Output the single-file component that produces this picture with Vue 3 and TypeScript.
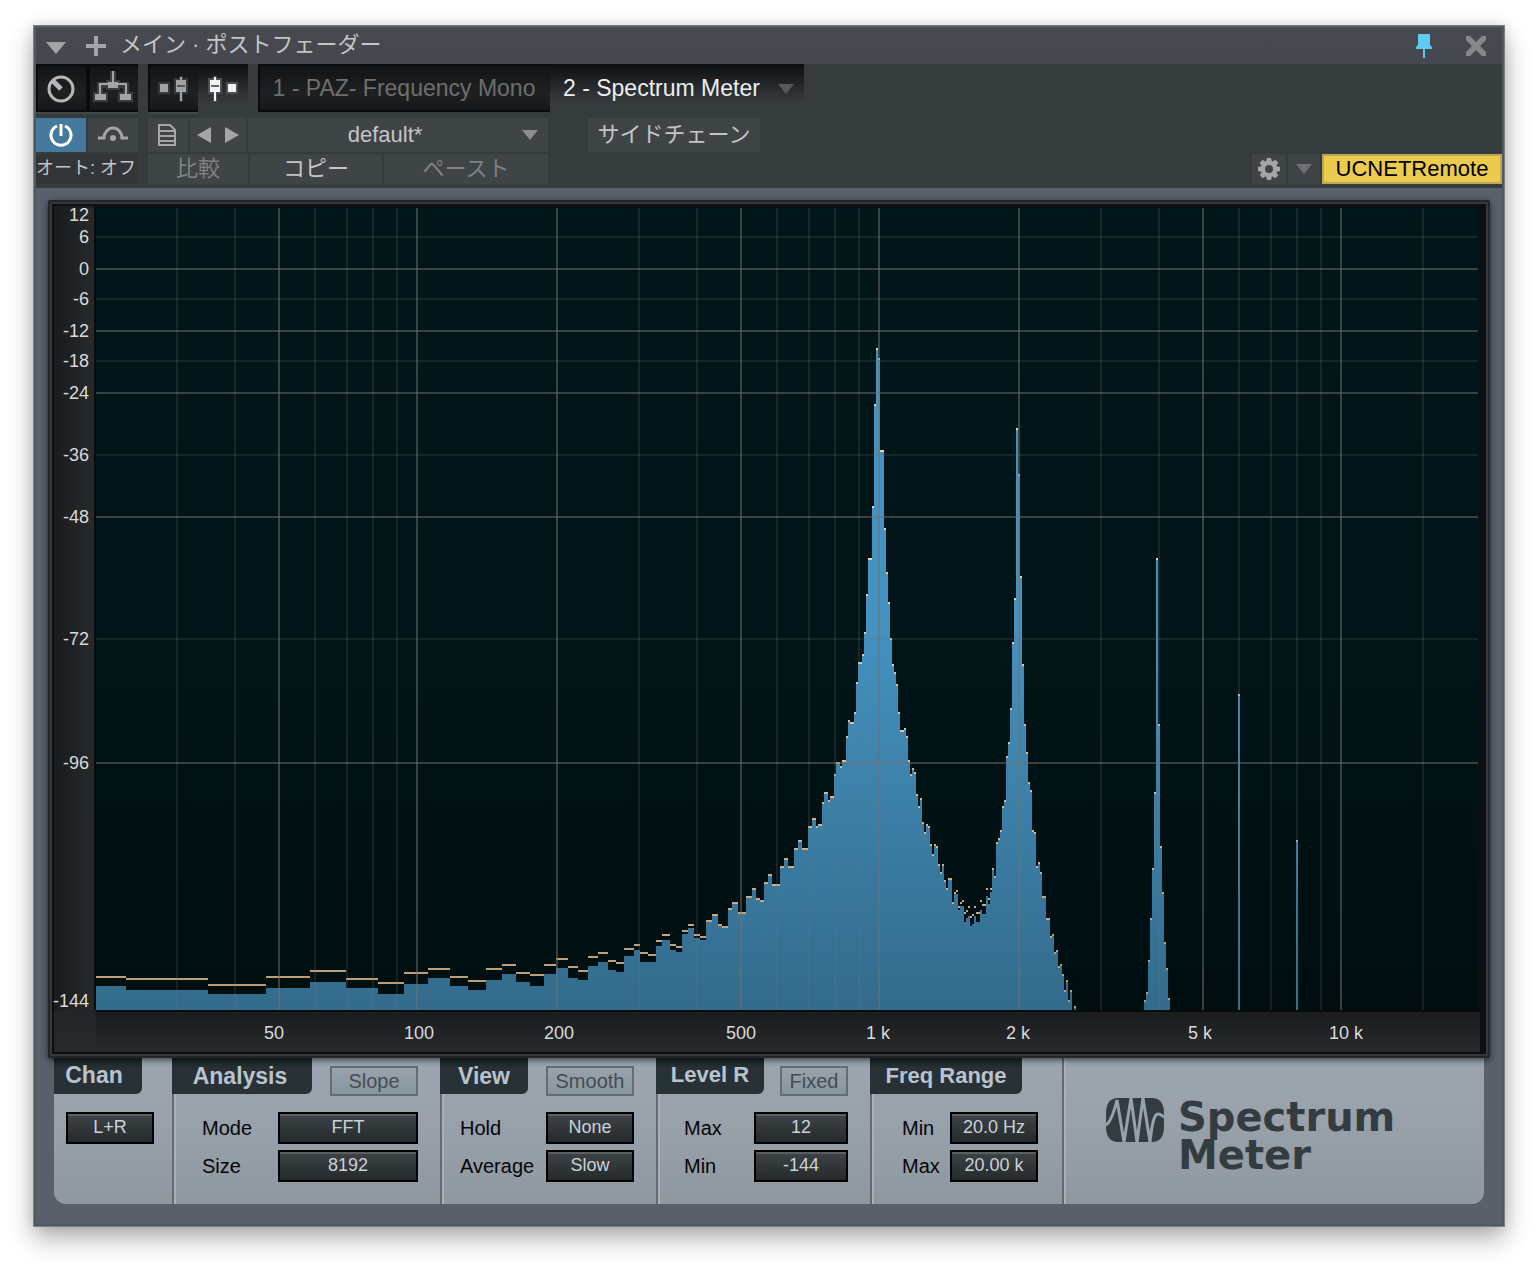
<script setup lang="ts">
import { ref } from 'vue'

type Bin = [x: number, hold: number, level?: number]

// Plot area in device units
const plot = { x: 96, y: 208, w: 1382, h: 802 }
const floor = plot.y + plot.h

// Left edge, peak-hold height and (when lower than the hold) current level
const bins: Bin[] = [
  [96, 976, 986], [126, 978, 990], [208, 984, 994], [266, 976, 988], [310, 970, 982],
  [346, 978, 988], [378, 982, 994], [404, 972, 984], [428, 968, 978], [450, 976, 986],
  [468, 980, 990], [486, 968, 980], [502, 964, 974], [516, 972, 982], [530, 974, 986],
  [544, 964, 974], [556, 958, 968], [568, 966, 978], [578, 970, 980], [588, 956, 966],
  [598, 952, 962], [608, 960, 970], [616, 962, 972], [624, 948, 956], [634, 944, 950],
  [640, 952, 962], [648, 954, 962], [656, 940, 946], [662, 934, 940], [670, 944, 950],
  [676, 946, 952], [682, 930, 934], [688, 924, 928], [694, 934, 938], [700, 936, 940],
  [706, 920], [712, 914], [718, 924], [722, 926], [728, 908], [732, 902], [738, 912],
  [746, 896], [752, 888], [756, 898], [760, 900], [764, 882], [768, 874], [772, 884],
  [780, 866], [784, 858], [788, 866], [794, 848], [798, 840], [802, 848], [808, 826],
  [812, 818], [816, 826], [818, 824], [822, 802], [824, 792], [828, 800], [830, 796],
  [834, 774], [836, 762], [840, 766], [842, 760], [846, 736], [848, 720], [850, 722],
  [854, 712], [856, 682], [858, 662], [862, 654], [864, 632], [866, 594], [868, 558],
  [872, 506], [874, 404], [876, 348], [878, 358], [880, 450], [884, 528], [886, 572],
  [888, 602], [890, 638], [892, 664], [894, 672], [896, 684], [898, 712], [900, 730],
  [904, 728], [906, 736], [908, 760], [910, 774], [912, 768], [914, 772], [916, 794],
  [918, 806], [920, 798], [922, 822], [924, 832], [926, 824], [928, 826], [930, 844],
  [932, 854], [934, 844], [936, 846], [938, 864], [940, 872], [942, 864], [944, 880],
  [946, 888], [948, 878], [952, 902], [954, 892], [956, 890, 894], [958, 906, 910],
  [960, 902, 906], [962, 900, 906], [964, 912, 922], [966, 910, 918], [968, 906, 916],
  [970, 916, 926], [972, 914, 924], [974, 906, 916], [976, 912, 922], [980, 900, 910],
  [982, 904, 914], [986, 888, 896], [988, 898, 904], [990, 888, 892], [992, 868],
  [994, 876], [996, 842], [998, 838], [1000, 830], [1002, 806], [1004, 800], [1006, 756],
  [1008, 742], [1010, 708], [1012, 642], [1014, 598], [1016, 428], [1018, 474],
  [1020, 576], [1022, 664], [1024, 724], [1026, 752], [1028, 782], [1030, 790],
  [1032, 830], [1034, 832], [1036, 866], [1038, 862], [1040, 872], [1042, 896],
  [1046, 918], [1050, 936], [1052, 934], [1054, 952], [1056, 950], [1058, 966],
  [1060, 964], [1062, 974], [1064, 990], [1066, 980], [1068, 1000], [1070, 990],
  [1072, floor], [1074, 1006], [1076, floor], [1144, 1000], [1146, 992], [1148, 960],
  [1150, 918], [1152, 868], [1154, 792], [1156, 558], [1158, 724], [1160, 846],
  [1162, 892], [1164, 942], [1166, 968], [1168, 998], [1170, floor], [1238, 694],
  [1240, floor], [1296, 840], [1298, floor],
]

const endOf = (i: number) => (i + 1 < bins.length ? bins[i + 1][0] : bins[i][0])

const levelPath =
  `M${plot.x} ${floor}` +
  bins.map(([x, hold, level], i) => `L${x} ${level ?? hold}H${endOf(i)}`).join('') +
  `V${floor}Z`

const holdPath = bins
  .map(([x, hold], i) => (hold < floor ? `M${x} ${hold}H${endOf(i)}v2H${x}Z` : ''))
  .join('')

const majorX = [278, 416, 556, 740, 878, 1018, 1202, 1340]
const minorX = [176, 234, 314, 346, 372, 396, 638, 696, 776, 808, 834, 858, 1100, 1158, 1238, 1270, 1296, 1320, 1422]
const majorY = [268, 330, 392, 516, 762]
const minorY = [236, 298, 360, 454, 638]

const levels = [
  { text: '12', y: 215 }, { text: '6', y: 237 }, { text: '0', y: 269 }, { text: '-6', y: 299 },
  { text: '-12', y: 331 }, { text: '-18', y: 361 }, { text: '-24', y: 393 }, { text: '-36', y: 455 },
  { text: '-48', y: 517 }, { text: '-72', y: 639 }, { text: '-96', y: 763 }, { text: '-144', y: 1001 },
]
const freqs = [
  { text: '50', x: 274 }, { text: '100', x: 419 }, { text: '200', x: 559 }, { text: '500', x: 741 },
  { text: '1 k', x: 878 }, { text: '2 k', x: 1018 }, { text: '5 k', x: 1200 }, { text: '10 k', x: 1346 },
]
const topOf = (y: number) => `${((y - plot.y) / plot.h) * 100}%`
const leftOf = (x: number) => `${((x - plot.x) / plot.w) * 100}%`

const preset = ref('default*')
const channel = ref('L+R')

interface Field { id: string; label: string; value: string; kind: 'select' | 'input' }
interface Section { name: string; title: string; toggle?: string; fields: Field[] }

const sections = ref<Section[]>([
  {
    name: 'analysis', title: 'Analysis', toggle: 'Slope',
    fields: [
      { id: 'mode', label: 'Mode', value: 'FFT', kind: 'select' },
      { id: 'size', label: 'Size', value: '8192', kind: 'select' },
    ],
  },
  {
    name: 'view', title: 'View', toggle: 'Smooth',
    fields: [
      { id: 'hold', label: 'Hold', value: 'None', kind: 'select' },
      { id: 'average', label: 'Average', value: 'Slow', kind: 'select' },
    ],
  },
  {
    name: 'level', title: 'Level R', toggle: 'Fixed',
    fields: [
      { id: 'level-max', label: 'Max', value: '12', kind: 'input' },
      { id: 'level-min', label: 'Min', value: '-144', kind: 'input' },
    ],
  },
  {
    name: 'freq', title: 'Freq Range',
    fields: [
      { id: 'freq-min', label: 'Min', value: '20.0 Hz', kind: 'input' },
      { id: 'freq-max', label: 'Max', value: '20.00 k', kind: 'input' },
    ],
  },
])
</script>

<template>
  <main class="window">
    <header class="titlebar">
      <button class="bare" aria-label="Menu">
        <svg width="20" height="20" viewBox="0 0 20 20"><path d="M0 6H20L10 18Z" fill="#a3a6a8" /></svg>
      </button>
      <button class="bare plus" aria-label="Add">
        <svg width="20" height="20" viewBox="0 0 20 20"><path d="M8 0h4v8h8v4h-8v8H8v-8H0V8h8Z" fill="#a3a6a8" /></svg>
      </button>
      <h1>メイン · ポストフェーダー</h1>
      <button class="bare pin" aria-label="Pin">
        <svg width="16" height="24" viewBox="0 0 16 24"><path d="M2 0H14V11L16 13V15H9V24H7V15H0V13L2 11Z" fill="#5fcbf3" /></svg>
      </button>
      <button class="bare close" aria-label="Close">
        <svg width="20" height="20" viewBox="0 0 20 20"><path d="M0 0H4L10 6L16 0H20V4L14 10L20 16V20H16L10 14L4 20H0V16L6 10L0 4Z" fill="#86898b" /></svg>
      </button>
    </header>

    <section class="toolbar">
      <div class="row modes">
        <div class="group">
          <button class="well" aria-label="Controls">
            <svg width="50" height="48" viewBox="0 0 50 48" fill="none" stroke="#b4b6b7">
              <circle cx="25" cy="25" r="12" stroke-width="3" /><path d="M17 17L25 25" stroke-width="5" />
            </svg>
          </button>
          <button class="well" aria-label="Routing">
            <svg width="50" height="48" viewBox="0 0 50 48">
              <path d="M25 7V19M12 31V21H38V31" fill="none" stroke="#3b3d3e" stroke-width="6" />
              <path d="M18 16h14v10H18ZM5 28h15v10H5ZM30 28h15v10H30Z" fill="#3b3d3e" />
              <path d="M25 7V19M12 31V20H38V31" fill="none" stroke="#a2a4a5" stroke-width="2" />
              <path d="M20 18h10v6H20ZM7 30h11v6H7ZM32 30h11v6H32Z" fill="#a2a4a5" />
            </svg>
          </button>
        </div>
        <div class="group">
          <button class="well" aria-label="Pre fader">
            <svg width="50" height="48" viewBox="0 0 50 48">
              <path d="M10 18h12v12H10ZM26 14h14v16H26ZM31 12h4v26h-4Z" fill="#38393a" />
              <path d="M12 20h8v8h-8ZM28 16h10v12H28ZM32 13h2v24h-2Z" fill="#a0a2a3" />
              <path d="M29 21h8v2h-8Z" fill="#555" />
            </svg>
          </button>
          <button class="well active" aria-label="Post fader">
            <svg width="50" height="48" viewBox="0 0 50 48">
              <path d="M10 14h14v16H10ZM15 12h4v26h-4ZM28 18h12v12H28Z" fill="#4d5052" />
              <path d="M12 16h10v12H12ZM16 13h2v24h-2ZM30 20h8v8h-8Z" fill="#f2f3f3" />
              <path d="M13 21h8v2h-8Z" fill="#666" />
            </svg>
          </button>
        </div>
        <nav class="tabs">
          <button class="well tab first">1 - PAZ- Frequency Mono</button>
          <button class="well tab active">
            <span>2 - Spectrum Meter</span>
            <svg width="16" height="10" viewBox="0 0 16 10"><path d="M0 0H16L8 10Z" fill="#56595c" /></svg>
          </button>
        </nav>
      </div>

      <div class="row upper">
        <button class="key power" aria-label="Power">
          <svg width="50" height="34" viewBox="0 0 50 34" fill="none" stroke="#fff" stroke-width="3">
            <path d="M21 8A10 10 0 1 0 29 8" /><path d="M25 6V18" />
          </svg>
        </button>
        <button class="key bypass" aria-label="Bypass">
          <svg width="50" height="34" viewBox="0 0 50 34">
            <path d="M10 20H16A9 10 0 0 1 34 20H40" fill="none" stroke="#a3a6a8" stroke-width="3" />
            <circle cx="25" cy="20" r="3" fill="#a3a6a8" />
          </svg>
        </button>
        <button class="key file" aria-label="Preset menu">
          <svg width="40" height="34" viewBox="0 0 40 34" fill="none" stroke="#a3a6a8" stroke-width="2">
            <path d="M11 7H22L27 12V27H11ZM11 13H26M11 18H26M11 23H26" />
          </svg>
        </button>
        <div class="stepper">
          <button class="key" aria-label="Previous preset">
            <svg width="14" height="16" viewBox="0 0 14 16"><path d="M14 0V16L0 8Z" fill="#a3a6a8" /></svg>
          </button>
          <button class="key" aria-label="Next preset">
            <svg width="14" height="16" viewBox="0 0 14 16"><path d="M0 0V16L14 8Z" fill="#a3a6a8" /></svg>
          </button>
        </div>
        <div class="preset">
          <select v-model="preset" aria-label="Preset"><option>default*</option></select>
          <svg width="16" height="10" viewBox="0 0 16 10"><path d="M0 0H16L8 10Z" fill="#8b8f92" /></svg>
        </div>
        <button class="key kana sidechain">サイドチェーン</button>
      </div>

      <div class="row lower">
        <span class="auto">オート: オフ</span>
        <button class="key kana compare dim">比較</button>
        <button class="key kana copy">コピー</button>
        <button class="key kana paste dim">ペースト</button>
        <button class="key gear" aria-label="Settings">
          <svg width="22" height="22" viewBox="-11 -11 22 22">
            <circle r="6" fill="none" stroke="#a3a6a8" stroke-width="4" />
            <path v-for="n in 8" :key="n" d="M-2 -11H2L3 -7H-3Z" fill="#a3a6a8" :transform="`rotate(${n * 45})`" />
          </svg>
        </button>
        <button class="key more" aria-label="More">
          <svg width="16" height="10" viewBox="0 0 16 10"><path d="M0 0H16L8 10Z" fill="#6d7174" /></svg>
        </button>
        <button class="remote">UCNETRemote</button>
      </div>
    </section>

    <section class="device">
      <div class="scope">
        <div class="axis-y">
          <span v-for="l in levels" :key="l.text" :style="{ top: topOf(l.y) }">{{ l.text }}</span>
        </div>
        <svg class="plot" :viewBox="`${plot.x} ${plot.y} ${plot.w} ${plot.h}`" preserveAspectRatio="none" shape-rendering="crispEdges">
          <defs>
            <linearGradient id="bg" x1="0" y1="0" x2="0" y2="1">
              <stop offset="0" stop-color="#011619" /><stop offset="0.5" stop-color="#011518" /><stop offset="1" stop-color="#000e10" />
            </linearGradient>
            <linearGradient id="level" gradientUnits="userSpaceOnUse" x1="0" y1="620" x2="0" y2="1010">
              <stop offset="0" stop-color="#4492c1" /><stop offset="1" stop-color="#336b8b" />
            </linearGradient>
            <linearGradient id="hold-line" gradientUnits="userSpaceOnUse" x1="0" y1="620" x2="0" y2="1010">
              <stop offset="0" stop-color="#f3cfa2" /><stop offset="1" stop-color="#b79a76" />
            </linearGradient>
          </defs>
          <rect :x="plot.x" :y="plot.y" :width="plot.w" :height="plot.h" fill="url(#bg)" />
          <path :d="levelPath" fill="url(#level)" />
          <path :d="holdPath" fill="url(#hold-line)" />
          <g class="minor">
            <rect v-for="x in minorX" :key="x" :x="x" :y="plot.y" width="2" :height="plot.h" />
            <rect v-for="y in minorY" :key="y" :x="plot.x" :y="y" :width="plot.w" height="2" />
          </g>
          <g class="major">
            <rect v-for="x in majorX" :key="x" :x="x" :y="plot.y" width="2" :height="plot.h" />
            <rect v-for="y in majorY" :key="y" :x="plot.x" :y="y" :width="plot.w" height="2" />
          </g>
        </svg>
        <div class="corner"></div>
        <div class="axis-x">
          <div class="ticks">
            <span v-for="f in freqs" :key="f.text" :style="{ left: leftOf(f.x) }">{{ f.text }}</span>
          </div>
        </div>
      </div>

      <div class="panel">
        <section class="cell chan">
          <div class="head"><h2>Chan</h2></div>
          <select v-model="channel" class="value" aria-label="Chan"><option>L+R</option></select>
        </section>
        <section v-for="s in sections" :key="s.name" class="cell split" :class="s.name">
          <div class="head">
            <h2>{{ s.title }}</h2>
            <button v-if="s.toggle" class="toggle">{{ s.toggle }}</button>
          </div>
          <div v-for="f in s.fields" :key="f.id" class="field">
            <label :for="f.id">{{ f.label }}</label>
            <select v-if="f.kind === 'select'" :id="f.id" v-model="f.value" class="value"><option>{{ f.value }}</option></select>
            <input v-else :id="f.id" v-model="f.value" class="value" type="text">
          </div>
        </section>
        <section class="cell split brand">
          <svg width="58" height="44" viewBox="0 0 58 44">
            <path d="M12 0H46Q58 0 58 16V28Q58 44 46 44H12Q0 44 0 28V16Q0 0 12 0Z" fill="#333c40" />
            <path d="M0 27C5 24 8 14 11 2L18 44L25 0L31 44L37 0L44 44C46 26 48 16 52 16C55 16 56 18 58 19" fill="none" stroke="#98a1ab" stroke-width="3" />
          </svg>
          <p>Spectrum<br>Meter</p>
        </section>
      </div>
    </section>
  </main>
</template>

<style>
body {
  margin: 0;
  background: #fff;
}
</style>

<style scoped>
* {
  box-sizing: border-box;
}
.window {
  margin: 25px 33px 42px;
  padding: 2px;
  border: 1px solid #7b8080;
  background: #52585f;
  box-shadow: 0 12px 24px rgba(0, 0, 0, 0.3), 0 0 12px rgba(0, 0, 0, 0.12);
  font-family: "Liberation Sans", "Noto Sans CJK JP", sans-serif;
  font-size: 22px;
}
button,
select,
input {
  margin: 0;
  padding: 0;
  border: 0;
  border-radius: 0;
  background: none;
  color: inherit;
  font: inherit;
  appearance: none;
}
svg {
  display: block;
}
.titlebar {
  display: flex;
  align-items: center;
  height: 36px;
  padding: 0 16px 0 10px;
  background: linear-gradient(#474b50, #44484f);
}
.bare {
  display: block;
}
.plus {
  margin-left: 20px;
}
.pin {
  margin-left: auto;
}
.close {
  margin-left: 34px;
}
h1 {
  margin: 0 0 2px 14px;
  color: #c3c5c7;
  font-size: 22px;
  font-weight: 400;
  line-height: 32px;
}
.toolbar {
  padding-bottom: 4px;
  background: #363b3e;
}
.row {
  display: flex;
  gap: 2px;
}
.modes {
  gap: 10px;
  margin-bottom: 4px;
}
.group {
  display: flex;
  width: 102px;
  border-bottom: 2px solid #42474a;
  background: #0b0c0d;
  gap: 2px;
}
.group + .group {
  width: 100px;
  gap: 0;
}
.well {
  height: 48px;
  width: 50px;
  background: linear-gradient(#121314, #1f2021 60%, #161718);
  box-shadow: inset 2px 2px 0 #0a0b0c, inset 0 -2px 0 #0a0b0c;
}
.well.active {
  height: 50px;
  margin-bottom: -2px;
  background: linear-gradient(#0d0e0f, #2f3336 60%, #363b3e 80%);
  box-shadow: none;
}
.well.active svg {
  margin-bottom: 2px;
}
.tabs {
  display: flex;
}
.tab {
  font-size: 23px;
}
.tab.first {
  width: 292px;
  color: #6d6f70;
}
.tab.active {
  display: flex;
  align-items: center;
  justify-content: space-between;
  width: 254px;
  padding: 0 10px 2px 13px;
  color: #eceeef;
}
.tab.active svg {
  margin: 2px 0 0;
}
.upper {
  margin-bottom: 2px;
}
.key {
  display: flex;
  align-items: center;
  justify-content: center;
  height: 34px;
  background: #3f4447;
  color: #c3c5c7;
}
.power {
  width: 50px;
  background: #467a9c;
}
.bypass {
  width: 50px;
}
.file {
  width: 40px;
  margin-left: 8px;
}
.stepper {
  display: flex;
}
.stepper .key {
  width: 28px;
}
.preset {
  display: flex;
  align-items: center;
  width: 300px;
  padding-right: 10px;
  background: #3f4447;
  color: #c3c5c7;
}
.preset select {
  flex: 1;
  height: 34px;
  padding-bottom: 2px;
  text-align: center;
  text-align-last: center;
}
.kana {
  padding-bottom: 6px;
}
.sidechain {
  width: 172px;
  margin-left: 38px;
}
.lower .key {
  height: 30px;
}
.lower .dim {
  color: #7e8284;
}
.auto {
  width: 102px;
  height: 30px;
  background: #323639;
  color: #c3c5c7;
  font-size: 18px;
  line-height: 28px;
  white-space: nowrap;
}
.lower .compare {
  width: 100px;
  margin-left: 8px;
}
.lower .copy {
  width: 132px;
}
.lower .paste {
  width: 164px;
}
.lower .gear {
  width: 34px;
  margin-left: auto;
}
.lower .more {
  width: 32px;
}
.remote {
  width: 180px;
  height: 30px;
  border: 2px solid #bda653;
  background: #ebcb4e;
  color: #000;
}
.device {
  padding: 12px 12px 20px;
  background: #59606a;
}
.scope {
  position: relative;
  z-index: 1;
  display: grid;
  grid-template-columns: 42px 1fr 4px;
  padding: 6px 8px 6px 6px;
  border-radius: 3px;
  background: #0a0f13;
  box-shadow: inset 0 0 0 2px #242529, inset 0 0 0 4px #37383a, 0 2px 6px rgba(0, 0, 0, 0.6);
}
.axis-y,
.axis-x {
  color: #d6dadd;
  font-size: 18px;
  line-height: 20px;
}
.axis-y {
  position: relative;
  border-top: 2px solid #1c1d1f;
  border-right: 2px solid #0a0b0d;
  background: linear-gradient(to right, #1a1b1d, #28292b);
}
.axis-y span {
  position: absolute;
  right: 5px;
  transform: translateY(-50%);
  white-space: nowrap;
}
.plot {
  width: 100%;
  height: auto;
  margin-top: 2px;
  grid-column: 2;
}
.minor {
  fill: rgba(110, 115, 115, 0.2);
}
.major {
  fill: rgba(115, 112, 110, 0.5);
}
.corner {
  grid-row: 2;
  grid-column: 1;
  background: linear-gradient(#232426, #28292b);
}
.axis-x {
  grid-row: 2;
  grid-column: 2 / 4;
  height: 42px;
  margin-right: 2px;
  padding-right: 2px;
  border-top: 2px solid #0a0b0d;
  background: linear-gradient(#1b1c1d, #28292a);
}
.ticks {
  position: relative;
  height: 100%;
}
.ticks span {
  position: absolute;
  top: 11px;
  transform: translateX(-50%);
  white-space: nowrap;
}
.panel {
  display: flex;
  margin: 0 6px;
  overflow: hidden;
  border-radius: 0 0 12px 12px;
  background: linear-gradient(#9ca5af, #99a1ab 40%, #8f989f);
}
.cell {
  padding-bottom: 22px;
}
.split {
  background: linear-gradient(to right, #656a70 2px, #aab0b8 2px 4px, transparent 4px);
}
.head {
  display: flex;
  align-items: flex-start;
  justify-content: space-between;
  height: 54px;
}
h2 {
  margin: 0;
  height: 36px;
  border-radius: 0 0 6px 0;
  background: linear-gradient(#1a2226, #283236 10px);
  color: #b9c3ce;
  font-size: 23px;
  line-height: 36px;
  text-align: center;
}
.toggle {
  height: 30px;
  margin-top: 8px;
  border: 2px solid #656d74;
  background: linear-gradient(#98a2ac, #87979f);
  color: #454c52;
  font-size: 20px;
}
.field {
  display: flex;
  align-items: center;
  justify-content: space-between;
  margin-bottom: 6px;
}
.field:last-child {
  margin-bottom: 0;
}
label {
  color: #050607;
  font-size: 20px;
}
.value {
  display: block;
  height: 32px;
  padding-bottom: 2px;
  border: 2px solid #000;
  background: linear-gradient(#3d4346, #252a2d);
  box-shadow: inset 0 2px 0 #5a5f62;
  color: #c9d2d8;
  font-size: 18px;
  text-align: center;
  text-align-last: center;
}
.chan {
  width: 118px;
}
.chan h2 {
  width: 88px;
  padding-right: 8px;
  line-height: 34px;
}
.chan .value {
  width: 88px;
  margin-left: 12px;
}
.analysis {
  width: 268px;
  padding-right: 22px;
}
.analysis h2 {
  width: 140px;
  padding-right: 4px;
}
.analysis .toggle {
  width: 88px;
}
.analysis .value {
  width: 140px;
}
.analysis .field {
  margin-left: 30px;
}
.view {
  width: 216px;
  padding-right: 22px;
}
.view h2 {
  width: 88px;
}
.view .toggle,
.view .value {
  width: 88px;
}
.view .field {
  margin-left: 20px;
}
.level {
  width: 214px;
  padding-right: 22px;
}
.level h2 {
  width: 108px;
  font-size: 22px;
  line-height: 34px;
}
.level .toggle {
  width: 68px;
}
.level .value {
  width: 94px;
}
.level .field {
  margin-left: 28px;
}
.freq {
  width: 192px;
  padding-right: 24px;
}
.freq h2 {
  width: 152px;
  font-size: 22px;
}
.freq .value {
  width: 88px;
}
.freq .field {
  margin-left: 32px;
}
.brand {
  display: flex;
  flex: 1;
  align-items: flex-start;
  gap: 14px;
  padding: 40px 0 0 44px;
}
.brand p {
  margin: 0;
  color: #333c40;
  font-family: "DejaVu Sans", sans-serif;
  font-size: 40px;
  font-weight: 700;
  line-height: 38px;
}
</style>
